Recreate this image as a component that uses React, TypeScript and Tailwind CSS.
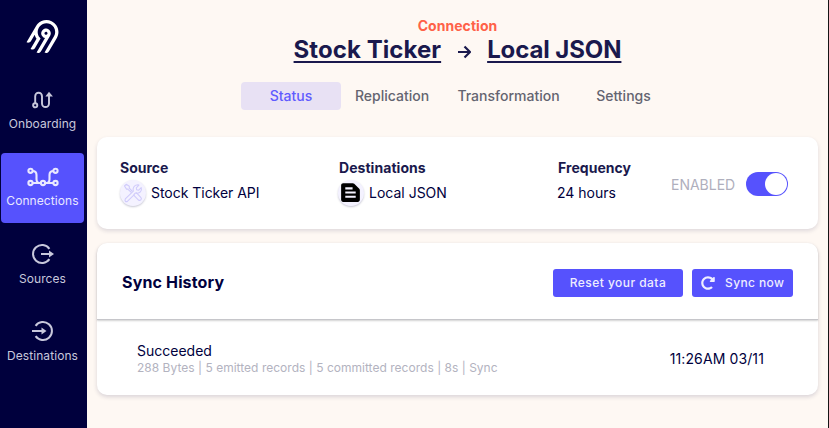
import React from "react";
import { SiAirbyte } from "react-icons/si";
import { MdTextSnippet } from "react-icons/md";
import { FaRedoAlt } from "react-icons/fa";

function OnboardingIcon() {
  return (
    <svg width="22" height="18" viewBox="0 0 22 18" fill="none" stroke="currentColor" strokeWidth="1.9">
      <circle cx="3.2" cy="14.3" r="2.1" />
      <path d="M3.2 12V5.2a3.4 3.4 0 0 1 6.8 0v7.3a3.5 3.5 0 0 0 7 0V4" />
      <path d="M13.4 5.4L17 .8l3.900 4.600z" fill="currentColor" stroke="none" />
    </svg>
  );
}

function ConnectionsIcon() {
  return (
    <svg width="32" height="20" viewBox="0 0 32 20" fill="none" stroke="currentColor" strokeWidth="2.1">
      <circle cx="3.500" cy="3.8" r="2.1" />
      <circle cx="28.500" cy="3.8" r="2.1" />
      <circle cx="3.500" cy="16" r="2.1" />
      <circle cx="16" cy="16" r="2.1" />
      <circle cx="28.500" cy="16" r="2.1" />
      <path d="M5.500 16h8.500M18 16h8.500M5.500 4c3 0 4 1.300 4 4v4c0 2.500 1 4 3 4M26.500 4c-3 0-4 1.300-4 4v4c0 2.500-1 4-3 4" />
    </svg>
  );
}

function SourcesIcon() {
  return (
    <svg width="24" height="22" viewBox="0 0 24 22" fill="none" stroke="currentColor" strokeWidth="2">
      <path d="M18.400 5.800A9 9 0 1 0 18.400 16.200M10 11h9" />
      <path d="M18 7.500l5 3.500-5 3.500z" fill="currentColor" stroke="none" />
    </svg>
  );
}

function DestinationsIcon() {
  return (
    <svg width="22" height="22" viewBox="0 0 22 22" fill="none" stroke="currentColor" strokeWidth="2">
      <path d="M3.600 5.800A9 9 0 1 1 3.600 16.200M0 11h10" />
      <path d="M9.500 7.500l5 3.500-5 3.500z" fill="currentColor" stroke="none" />
    </svg>
  );
}

function ToolsIcon() {
  return (
    <svg width="20" height="20" viewBox="0 0 20 20" fill="none" stroke="#d0cbfb" strokeWidth="1.100" strokeLinejoin="round" strokeLinecap="round">
      <path d="M1.500 3L3.200 1.300 6.300 3.200v2L9 8M5 6.300L8 9.200M1.500 3l2 3.100H5" />
      <path d="M11 11.500l1.300-1.300c.6-.5 1.200-.3 1.700.2l3.800 3.900c1.700 1.800-.8 4.200-2.500 2.500l-3.900-3.900c-.5-.5-.7-.9-.4-1.400z" />
      <path d="M10.300 8.200c-.8-3 .5-6.200 4.400-6.500l1.200.4-2.600 2.700.4 2 2 .4 2.500-2.600c1.100 3.500-1.700 6.200-4.800 5.500M10.300 8.200l-8 7.700c-1 2 .5 3.500 2.300 2.300l6.200-6.100" />
    </svg>
  );
}

interface NavItemProps {
  label: string;
  active?: boolean;
  low?: boolean;
  children: React.ReactNode;
}

function NavItem({ label, active, low, children }: NavItemProps) {
  return (
    <a className={`flex h-[70px] w-[83px] flex-col items-center rounded pt-[13px] ${active ? "bg-[#5652fd] text-[#e9e8ff]" : "text-[#c8c8dc]"}`}>
      <span className="flex h-[22px] items-center">{children}</span>
      <span className={`${low ? "mt-[6px]" : "mt-[5px]"} text-[12px] leading-4 tracking-[0.08px] whitespace-nowrap`}>{label}</span>
    </a>
  );
}

export default function App() {
  return (
    <div className="flex h-[428px] w-[829px] overflow-hidden border-r border-[#151515] bg-[#fef8f3] font-['Inter',sans-serif] text-[#1a194d]">
      <aside className="flex w-[87px] shrink-0 flex-col bg-[#00003d] pl-px">
        <div className="flex h-[76px] pt-[20px] pl-[25px] text-white">
          <SiAirbyte size={33} />
        </div>
        <nav className="flex flex-col gap-[7px]">
          <NavItem label="Onboarding"><OnboardingIcon /></NavItem>
          <NavItem label="Connections" active><ConnectionsIcon /></NavItem>
          <NavItem label="Sources" low><SourcesIcon /></NavItem>
          <NavItem label="Destinations" low><DestinationsIcon /></NavItem>
        </nav>
      </aside>
      <main className="flex flex-1 flex-col pr-[10px] pl-[10px]">
        <header className="flex flex-col items-center pt-[17px]">
          <div className="text-[14px] leading-[18px] font-bold tracking-[0.05px] text-[#ff6148]">Connection</div>
          <h1 className="flex h-[30px] items-center text-[24px] leading-[30px] font-bold whitespace-nowrap">
            <span className="tracking-[0.06px] underline decoration-2 underline-offset-[3px]">Stock Ticker</span>
            <svg className="mx-[16px] mt-1" width="14" height="14" viewBox="0 0 14 14" fill="none" stroke="currentColor" strokeWidth="2.2">
              <path d="M1 7h12M7.500 1.500L13 7 7.500 12.500" />
            </svg>
            <span className="tracking-[-0.1px] underline decoration-2 underline-offset-[3px]">Local JSON</span>
          </h1>
        </header>
        <nav className="mt-[17px] -ml-0.5 flex h-7 justify-center text-[14px] leading-7 font-medium text-[#646470]">
          <span className="w-[100px] rounded bg-[#e8e1f4] pl-px text-center text-[#5f5bff]">Status</span>
          <span className="w-[102px] pl-px text-center">Replication</span>
          <span className="w-[131px] pl-px text-center">Transformation</span>
          <span className="w-[99px] pl-px text-center">Settings</span>
        </nav>
        <section className="mt-[27px] flex h-[92px] shrink-0 rounded-[10px] bg-white pt-[22px] pl-[23px] text-[14px] shadow-[0_2px_4px_rgba(26,25,77,0.14)]">
          <div className="w-[219px]">
            <h2 className="leading-[18px] font-bold">Source</h2>
            <div className="mt-[3px] flex h-[26px] items-center gap-[5px] text-[#00003d]">
              <span className="flex size-[26px] items-center justify-center rounded-full bg-[#f4f2ff] shadow-[0_1px_2px_rgba(26,25,77,0.24)]"><ToolsIcon /></span>
              <span className="pb-0.5 tracking-[-0.03px]">Stock Ticker API</span>
            </div>
          </div>
          <div className="w-[218px]">
            <h2 className="leading-[18px] font-bold tracking-[0.05px]">Destinations</h2>
            <div className="mt-[3px] flex h-[26px] items-center gap-[5px] text-[#00003d]">
              <span className="-ml-px flex size-[26px] items-center justify-center rounded-full bg-[#f4f2ff] pr-px pb-px shadow-[0_1px_2px_rgba(26,25,77,0.24)]"><MdTextSnippet size={25} color="#000" /></span>
              <span className="pb-0.5">Local JSON</span>
            </div>
          </div>
          <div className="w-[114px]">
            <h2 className="pl-px leading-[18px] font-bold tracking-[0.05px]">Frequency</h2>
            <div className="mt-[3px] leading-[26px] text-[#00003d]">24 hours</div>
          </div>
          <div className="mt-[13px] flex h-6 items-center gap-[11px]">
            <span className="text-[14px] text-[#afafbd]">ENABLED</span>
            <span className="flex h-6 w-[42px] items-center justify-end rounded-full bg-[#5652fd] pr-px"><span className="size-[22px] rounded-full bg-white" /></span>
          </div>
        </section>
        <section className="mt-[14px] h-[152px] shrink-0 rounded-[10px] bg-white shadow-[0_2px_4px_rgba(26,25,77,0.16)]">
          <div className="flex h-[77px] items-center rounded-t-[10px] border-b border-[#c6c6ca] pr-[25px] pl-[25px] pt-1 shadow-[0_1px_2px_rgba(0,0,0,0.18)]">
            <h2 className="mr-auto pb-0.5 text-[16px] font-bold tracking-[0.15px] text-[#00003d]">Sync History</h2>
            <button className="h-7 w-[130px] rounded-[3px] bg-[#5652fd] text-[12px] font-medium tracking-[0.45px] text-[#eeedff]">Reset your data</button>
            <button className="ml-[9px] flex h-7 w-[101px] items-center rounded-[3px] bg-[#5652fd] pl-[9px] text-[12px] font-medium tracking-[0.4px] whitespace-nowrap text-[#eeedff]">
              <FaRedoAlt size={14} className="mr-[10px]" />Sync now
            </button>
          </div>
          <div className="flex h-[75px] items-center justify-between pr-[54px] pl-[40px]">
            <div className="pt-[2px]">
              <div className="text-[14px] leading-[17px] text-[#00003d]">Succeeded</div>
              <div className="pt-px text-[12px] leading-4 tracking-[0.02px] text-[#b3b3bf]">288 Bytes | 5 emitted records | 5 committed records | 8s | Sync</div>
            </div>
            <time className="pt-0.5 text-[14px] tracking-[0.12px] text-[#00003d]">11:26AM 03/11</time>
          </div>
        </section>
      </main>
    </div>
  );
}
